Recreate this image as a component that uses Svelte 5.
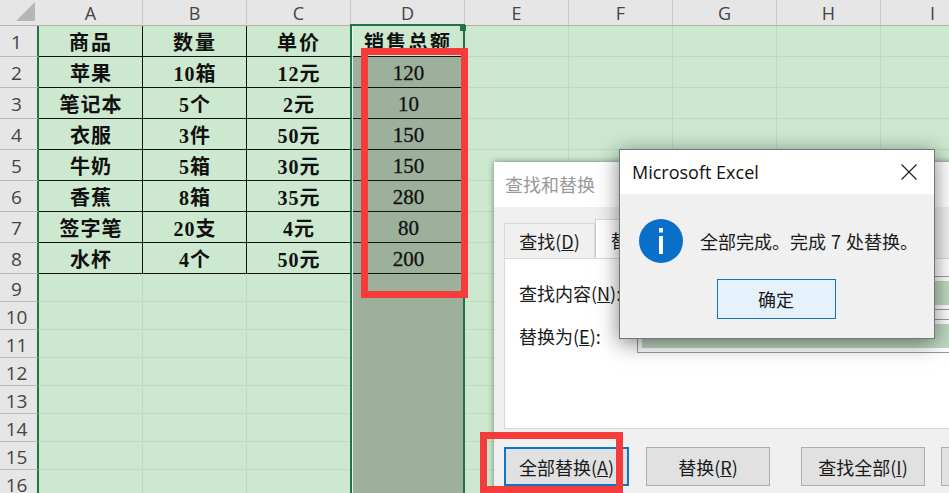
<script>
  const columns = ['A', 'B', 'C', 'D', 'E', 'F', 'G', 'H', 'I'];
  const table = [
    ['商品', '数量', '单价', '销售总额'],
    ['苹果', '10箱', '12元', '120'],
    ['笔记本', '5个', '2元', '10'],
    ['衣服', '3件', '50元', '150'],
    ['牛奶', '5箱', '30元', '150'],
    ['香蕉', '8箱', '35元', '280'],
    ['签字笔', '20支', '4元', '80'],
    ['水杯', '4个', '50元', '200']
  ];
  const rowCount = 16;
  const rows = Array.from({ length: rowCount }, (_, i) => i);
</script>

<div class="screen">
  <div class="sheet">
    <div class="corner"><span class="triangle"></span></div>
    {#each columns as col}
      <div class="col_head">{col}</div>
    {/each}

    {#each rows as r}
      <div class="row_head">{r + 1}</div>
      {#each columns as col, c}
        {@const value = table[r]?.[c]}
        <div
          class="cell"
          class:boxed={r < table.length && c < 4}
          class:shaded={c === 3 && r > 0}
          class:title={r === 0}
        >{value ?? ''}</div>
      {/each}
    {/each}
  </div>

  <div class="selection"><span class="handle"></span></div>

  <section class="find_dialog">
    <header class="find_title">查找和替换</header>
    <div class="find_body">
      <div class="tabs">
        <span class="tab">查找(<u>D</u>)</span>
        <span class="tab active">替换(<u>P</u>)</span>
      </div>
      <div class="panel">
        <div class="field_row">
          <span>查找内容(<u>N</u>):</span>
          <span class="field"></span>
        </div>
        <div class="field_row">
          <span>替换为(<u>E</u>):</span>
          <span class="field"></span>
        </div>
      </div>
      <div class="actions">
        <button class="btn primary">全部替换(<u>A</u>)</button>
        <button class="btn second">替换(<u>R</u>)</button>
        <button class="btn third">查找全部(<u>I</u>)</button>
        <button class="btn last"></button>
      </div>
    </div>
  </section>

  <section class="msg_dialog">
    <header class="msg_title">
      <span>Microsoft Excel</span>
      <svg class="close" width="16" height="16" viewBox="0 0 16 16" aria-hidden="true">
        <path d="M0.5 0.5 L15.5 15.5 M15.5 0.5 L0.5 15.5" stroke="#1a1a1a" stroke-width="1.1" fill="none" />
      </svg>
    </header>
    <div class="msg_body">
      <div class="msg_text">
        <svg width="44" height="44" viewBox="0 0 44 44" aria-hidden="true">
          <circle cx="22" cy="22" r="22" fill="#0a6fc9" />
          <rect x="20" y="9" width="4" height="4.5" fill="#fff" />
          <rect x="20" y="17" width="4" height="18" fill="#fff" />
        </svg>
        <span>全部完成。完成 7 处替换。</span>
      </div>
      <button class="ok">确定</button>
    </div>
  </section>

  <div class="mark mark_col"></div>
  <div class="mark mark_btn"></div>
</div>

<style>
  :global(body) {
    margin: 0;
    overflow: hidden;
  }

  .screen {
    position: relative;
    width: 949px;
    height: 493px;
    overflow: hidden;
    background: #cce8cf;
    font-family: "Noto Sans CJK SC", "Open Sans", sans-serif;
    color: #1a1a1a;
  }

  .sheet {
    display: grid;
    grid-template-columns: 39px 104px 104px 104px 114px 104px 104px 104px 104px 104px;
    grid-template-rows: 26px repeat(8, 31px) repeat(8, 28px);
  }

  .corner {
    position: relative;
    background: #e6e6e6;
    border-bottom: 1px solid #b4b4b4;
  }

  .triangle {
    position: absolute;
    right: 4px;
    bottom: 4px;
    border-style: solid;
    border-width: 0 0 19px 19px;
    border-color: transparent transparent #b6b6b6 transparent;
  }

  .col_head {
    display: flex;
    align-items: center;
    justify-content: center;
    background: #e6e6e6;
    border-right: 1px solid #c8c8c8;
    border-bottom: 1px solid #a9b5ab;
    font: 18px "Open Sans", sans-serif;
    color: #444;
  }

  .row_head {
    display: flex;
    align-items: center;
    justify-content: center;
    padding: 2px 4px 0 0;
    background: #e6e6e6;
    border-right: 2px solid #217346;
    border-bottom: 1px solid #b9b9b9;
    font: 19px "Open Sans", sans-serif;
    color: #444;
  }

  .row_head,
  .col_head,
  .cell,
  .corner {
    box-sizing: border-box;
  }

  .cell {
    display: flex;
    align-items: center;
    justify-content: center;
    padding: 0 0 0 1px;
    border-right: 1px solid #bedac2;
    border-bottom: 1px solid #bedac2;
    font: 700 20px "Liberation Serif", "Noto Sans CJK SC", serif;
    letter-spacing: 1px;
    color: #111;
  }

  .cell.title {
    letter-spacing: 2px;
    padding-top: 1px;
  }

  .cell.boxed {
    border-right-color: #111;
    border-bottom-color: #111;
  }

  .cell.shaded {
    background: #9cb09c;
    border-right-color: #9cb09c;
    font-weight: 400;
    font-size: 21px;
    letter-spacing: 0;
    padding: 2px 0 0 2px;
    -webkit-text-stroke: 0.3px #111;
  }

  .cell.shaded:not(.boxed) {
    border-bottom-color: #9cb09c;
  }

  .selection {
    position: absolute;
    left: 350px;
    top: 24px;
    width: 115px;
    height: 480px;
    box-sizing: border-box;
    border: 2px solid #217346;
    box-shadow: inset 1px 0 0 #e8f3ea;
  }

  .handle {
    position: absolute;
    right: -3px;
    top: -1px;
    width: 6px;
    height: 6px;
    background: #217346;
  }

  .find_dialog {
    position: absolute;
    left: 494px;
    top: 162px;
    width: 520px;
    height: 340px;
    display: flex;
    flex-direction: column;
    background: #f0f0f0;
    box-shadow: 0 0 6px rgba(0, 0, 0, 0.45);
  }

  .find_title {
    height: 45px;
    padding-left: 11px;
    background: #fff;
    color: #999;
    font-size: 18px;
    line-height: 44px;
  }

  .find_body {
    flex: 1;
    padding: 12px 0 0 10px;
  }

  .tabs {
    display: flex;
    align-items: flex-end;
    height: 39px;
    font-size: 18px;
  }

  .tab {
    width: 91px;
    height: 35px;
    box-sizing: border-box;
    text-align: center;
    line-height: 34px;
    border: 1px solid #d9d9d9;
    border-bottom: none;
  }

  .tab.active {
    height: 39px;
    background: #fff;
    border-left: 1px solid #cfcfcf;
    line-height: 40px;
  }

  .panel {
    height: 171px;
    box-sizing: border-box;
    padding: 16px 0 0 14px;
    background: #fff;
    border: 1px solid #d9d9d9;
    font-size: 18px;
  }

  .field_row {
    display: flex;
    align-items: center;
    height: 35px;
    margin-bottom: 8px;
  }

  .field {
    position: absolute;
    left: 143px;
    width: 360px;
    height: 34px;
    box-sizing: border-box;
    border: 1px solid #9a9a9a;
    background: #bfd9c2;
    outline: 4px solid #fff;
    outline-offset: -5px;
  }

  .actions {
    display: flex;
    gap: 17px;
    margin-top: 18px;
  }

  .btn {
    flex: none;
    width: 124px;
    height: 39px;
    padding: 0;
    background: #e1e1e1;
    border: 1px solid #adadad;
    font: 18px "Noto Sans CJK SC", sans-serif;
    color: #1a1a1a;
  }

  .btn.primary {
    width: 125px;
    border: 2px solid #0f75c9;
  }

  .btn.second {
    margin-right: 14px;
  }

  .btn.third {
    margin-right: -1px;
  }

  .msg_dialog {
    position: absolute;
    left: 619px;
    top: 149px;
    width: 316px;
    height: 190px;
    box-sizing: border-box;
    display: flex;
    flex-direction: column;
    background: #f0f0f0;
    border: 1px solid #6e7a72;
    box-shadow: 0 4px 20px rgba(0, 0, 0, 0.5);
  }

  .msg_title {
    display: flex;
    align-items: center;
    justify-content: space-between;
    height: 44px;
    padding: 0 17px 0 12px;
    background: #fff;
    font: 18px "Open Sans", sans-serif;
    color: #111;
  }

  .msg_body {
    flex: 1;
    display: flex;
    flex-direction: column;
    align-items: center;
  }

  .msg_text {
    display: flex;
    align-items: center;
    gap: 17px;
    align-self: flex-start;
    margin: 25px 0 0 19px;
    font-size: 18px;
    word-spacing: 1px;
  }

  .ok {
    width: 119px;
    height: 40px;
    margin: 16px 2px 0 0;
    padding: 0;
    background: #e5f1fb;
    border: 1px solid #0f75b9;
    font: 18px "Noto Sans CJK SC", sans-serif;
    color: #1a1a1a;
  }

  .mark {
    position: absolute;
    box-sizing: border-box;
    border: 7px solid #f63c3a;
  }

  .mark_col {
    left: 361px;
    top: 48px;
    width: 107px;
    height: 250px;
  }

  .mark_btn {
    left: 480px;
    top: 432px;
    width: 143px;
    height: 61px;
  }
</style>
